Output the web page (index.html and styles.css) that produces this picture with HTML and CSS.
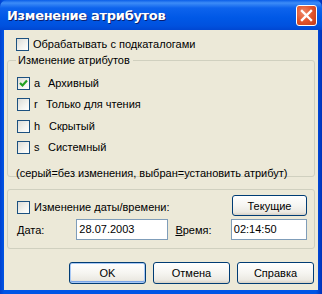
FILE: index.html
```html
<!DOCTYPE html>
<html lang="ru">
<head>
    <meta charset="UTF-8">
    <title>Изменение атрибутов</title>
    <link rel="stylesheet" href="styles.css">
</head>
<body>

<div class="window">
    <!-- Title bar -->
    <div class="titlebar">
        <span class="title">Изменение атрибутов</span>
        <span class="close-btn">
            <svg width="13" height="13" viewBox="0 0 13 13">
                <path d="M2 2 L11 11 M11 2 L2 11" stroke="#fff" stroke-width="2.4" stroke-linecap="square"/>
            </svg>
        </span>
    </div>

    <div class="client">
        <label class="check top-check">
            <span class="box"></span>
            <span>Обрабатывать с подкаталогами</span>
        </label>

        <!-- Attributes -->
        <div class="group attrs">
            <span class="group-title">Изменение атрибутов</span>
            <div class="attr-list">
                <label class="check">
                    <span class="box checked">
                        <svg width="9" height="9" viewBox="0 0 9 9">
                            <path d="M1 4 L3.5 6.5 L8 1.5" stroke="#21a121" stroke-width="2.2" fill="none"/>
                        </svg>
                    </span>
                    <span class="letter">a</span><span class="name">Архивный</span>
                </label>
                <label class="check">
                    <span class="box"></span>
                    <span class="letter">r</span><span class="name n-r">Только для чтения</span>
                </label>
                <label class="check">
                    <span class="box"></span>
                    <span class="letter">h</span><span class="name n-h">Скрытый</span>
                </label>
                <label class="check">
                    <span class="box"></span>
                    <span class="letter">s</span><span class="name">Системный</span>
                </label>
            </div>
            <div class="hint">(серый=без изменения, выбран=установить атрибут)</div>
        </div>

        <!-- Date / time -->
        <div class="group datetime">
            <div class="dt-row">
                <label class="check">
                    <span class="box"></span>
                    <span>Изменение даты/времени:</span>
                </label>
                <button class="btn btn-now">Текущие</button>
            </div>
            <div class="dt-row fields">
                <span class="field-label"><u>Д</u>ата:</span>
                <span class="input date-input">28.07.2003</span>
                <span class="field-label time-label"><u>В</u>ремя:</span>
                <span class="input time-input">02:14:50</span>
            </div>
        </div>

        <!-- Buttons -->
        <div class="buttons">
            <button class="btn default">OK</button>
            <button class="btn">Отмена</button>
            <button class="btn">Справка</button>
        </div>
    </div>
</div>

</body>
</html>
```

FILE: styles.css
```css
body {
    margin: 0;
    font-family: "Liberation Sans", Arial, sans-serif;
    font-size: 11px;
    color: #000;
}
.window {
    width: 322px;
    height: 294px;
    display: flex;
    flex-direction: column;
    background: linear-gradient(to right, #0041d0 0, #0055e5 4px, #0055e5 316px, #0030b8 322px);
    box-sizing: border-box;
}
.titlebar {
    height: 30px;
    display: flex;
    align-items: center;
    justify-content: space-between;
    padding: 0 5px 0 7px;
    background: linear-gradient(to bottom, #0a5ee8 0, #3d8cf7 3px, #0d63ed 8px, #0058e6 18px, #0051de 26px, #0047d2 30px);
    border-radius: 7px 7px 0 0;
}
.title {
    color: #fff;
    font-family: "DejaVu Sans", sans-serif;
    font-weight: bold;
    font-size: 13px;
    letter-spacing: -0.3px;
    text-shadow: 1px 1px 0 #0a1e6e;
    margin-top: 1px;
}
.close-btn {
    width: 19px;
    height: 19px;
    border: 1px solid #fff;
    border-radius: 3px;
    background: radial-gradient(circle at 35% 35%, #f08a6a 0, #e2542b 50%, #c0391a 100%);
    display: flex;
    align-items: center;
    justify-content: center;
    margin-top: 1px;
}
.client {
    flex: 1;
    margin: 0 4px 4px 4px;
    background: #ece9d8;
    display: flex;
    flex-direction: column;
}
.check {
    display: flex;
    align-items: center;
    height: 13px;
    line-height: 13px;
    white-space: nowrap;
}
.box {
    width: 11px;
    height: 11px;
    border: 1px solid #1c5180;
    background: linear-gradient(135deg, #dcdcd7 0, #f4f4f0 60%, #ffffff 100%);
    margin-right: 4px;
    flex: none;
    display: flex;
    align-items: center;
    justify-content: center;
}
.top-check {
    margin: 8px 0 0 12px;
}
.group {
    position: relative;
    margin: 0 3px;
    border: 1px solid #d0d0bf;
    border-radius: 3px;
}
.group-title {
    position: absolute;
    top: -7px;
    left: 8px;
    padding: 0 3px 0 2px;
    background: #ece9d8;
    line-height: 13px;
}
.attrs {
    margin-top: 9px;
    height: 117px;
    padding: 16px 0 0 9px;
    box-sizing: border-box;
}
.attr-list {
    display: flex;
    flex-direction: column;
    gap: 8.4px;
}
.letter {
    width: 13px;
}
.name {
    margin-left: 1px;
}
.n-r {
    margin-left: -1px;
}
.n-h {
    margin-left: 2px;
}
.hint {
    margin: 13px 0 0 -1px;
    line-height: 13px;
}
.datetime {
    margin-top: 12px;
    height: 60px;
    box-sizing: border-box;
    padding: 5px 7px 0 9px;
}
.dt-row {
    display: flex;
    align-items: center;
    justify-content: space-between;
}
.dt-row .check {
    margin-top: 3px;
}
.btn {
    font-family: "Liberation Sans", Arial, sans-serif;
    font-size: 11px;
    font-weight: normal;
    width: 77px;
    height: 22px;
    padding: 0;
    border: 1px solid #003c74;
    border-radius: 3px;
    background: linear-gradient(to bottom, #ffffff 0, #f6f5f1 50%, #ebe9e2 85%, #d6d0c5 100%);
    color: #000;
}
.btn-now {
    width: 75px;
    height: 21px;
}
.fields {
    margin-top: 3px;
    justify-content: flex-start;
}
.field-label {
    width: 60px;
}
.time-label {
    width: 56px;
    margin-left: 7px;
}
.input {
    height: 19px;
    line-height: 19px;
    border: 1px solid #7f9db9;
    background: #fff;
    padding-left: 2px;
    box-sizing: content-box;
}
.date-input {
    width: 89px;
}
.time-input {
    width: 73px;
}
.buttons {
    display: flex;
    justify-content: flex-end;
    gap: 7px;
    margin: 13px 4px 0 0;
}
.btn.default {
    box-shadow: inset 0 0 0 1px #a8c8f5, inset 0 -1px 0 1px #7aa5e8;
}
```
